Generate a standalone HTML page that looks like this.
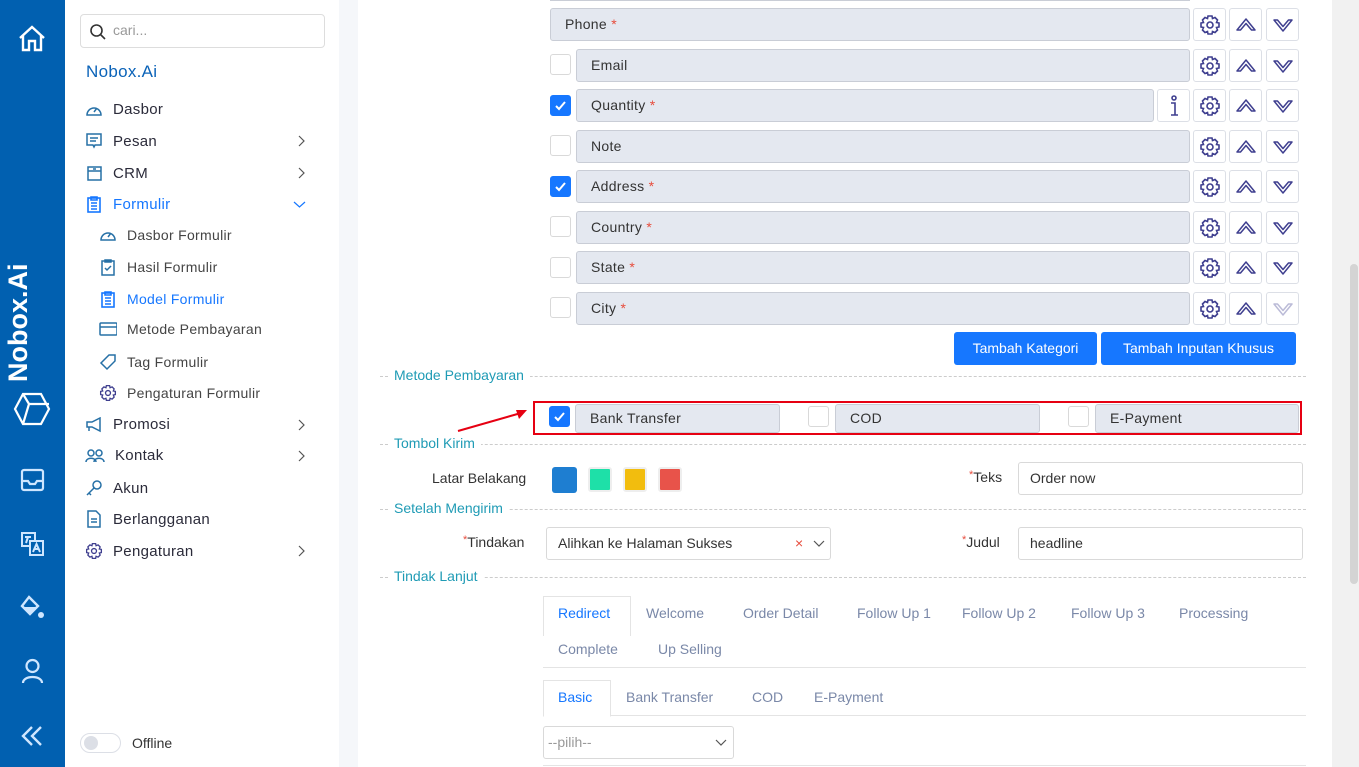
<!DOCTYPE html>
<html><head><meta charset="utf-8"><style>
*{box-sizing:border-box;margin:0;padding:0}
body{width:1359px;height:767px;overflow:hidden;font-family:"Liberation Sans",sans-serif;background:#f5f7fa;position:relative;color:#333}
.abs{position:absolute}
#bar{left:0;top:0;width:65px;height:767px;background:#0160b0}
#side{left:65px;top:0;width:274px;height:767px;background:#fff}
#main{left:358px;top:0;width:974px;height:767px;background:#fff}
#scroll{left:1332px;top:0;width:27px;height:767px;background:#f1f1f1}
.mi{position:absolute;left:20px;font-size:15px;color:#2b2b3a;display:flex;align-items:center;letter-spacing:0.3px}
.mi svg{margin-right:10px}
.sub{left:34px;font-size:14px;color:#444}
.chev{position:absolute;right:14px;top:3px}
.inp{position:absolute;background:#e4e8f0;border:1px solid #c9cdd6;border-radius:3px;height:33px;font-size:14px;color:#333;padding-left:14px;line-height:31px;letter-spacing:0.3px}
.inp b{color:#e74c3c;font-weight:normal}
.cb{position:absolute;width:21px;height:21px;border:1px solid #d9d9d9;border-radius:3px;background:#fff}
.cb.on{background:#1677ff;border-color:#1677ff}
.btn{position:absolute;width:33px;height:33px;border:1px solid #dcdfe6;border-radius:3px;background:#fff;display:flex;align-items:center;justify-content:center}
.sec{position:absolute;left:380px;width:926px;border-top:1px dashed #ccc}
.sec span{position:absolute;left:8px;top:-10px;background:#fff;padding:0 6px;color:#1f9bb5;font-size:14px}
.blue{position:absolute;background:#1677ff;color:#fff;font-size:14px;border-radius:3px;text-align:center;line-height:33px;height:33px}
.box{position:absolute;border:1px solid #d9d9d9;border-radius:3px;background:#fff;font-size:14px;line-height:31px;padding-left:11px;height:33px}
.lbl{position:absolute;font-size:14px;color:#333}
.lbl i{color:#e74c3c;font-style:normal;font-size:11px;vertical-align:top}
.tab{position:absolute;font-size:14px;color:#7a88a8}
</style></head><body>
<div id="bar" class="abs">
<svg class="abs" style="left:17px;top:24px" width="30" height="28" viewBox="0 0 30 28" fill="none" stroke="#fff" stroke-width="2.4"><path d="M3 14 L15 3 L27 14 M6 11 V26 H12 V17 H18 V26 H24 V11"/></svg>
<div class="abs" style="left:3px;top:382px;transform:rotate(-90deg);transform-origin:0 0;color:#fff;font-weight:bold;font-size:27px;width:130px;white-space:nowrap">Nobox.Ai</div>
<svg class="abs" style="left:13px;top:392px" width="38" height="34" viewBox="0 0 38 34" fill="none" stroke="#fff" stroke-width="2.2"><path d="M10 2 H28 L36 17 L28 32 H10 L2 17 Z M10 2 L16 12 H36 M16 12 L10 32"/></svg>
<svg class="abs" style="left:20px;top:468px" width="25" height="24" viewBox="0 0 25 24" fill="none" stroke="#cfe6ff" stroke-width="2.2"><rect x="2" y="2" width="21" height="20" rx="2"/><path d="M2 13 H8 L10 16 H15 L17 13 H23"/></svg>
<svg class="abs" style="left:20px;top:531px" width="25" height="26" viewBox="0 0 25 26" fill="none" stroke="#cfe6ff" stroke-width="2"><rect x="2" y="2" width="13" height="13"/><rect x="10" y="10" width="13" height="14" fill="#0160b0"/><path d="M13 21 L16.5 13 L20 21 M14 18 H19 M5 6 H11 M8 6 L6 12"/></svg>
<svg class="abs" style="left:20px;top:594px" width="26" height="26" viewBox="0 0 26 26" fill="#cfe6ff"><path d="M9 3 L18 12 L10 20 L2 12 Z" fill="none" stroke="#cfe6ff" stroke-width="2.4"/><path d="M4 13 H17 L10 20 Z"/><circle cx="21" cy="21" r="3"/></svg>
<svg class="abs" style="left:21px;top:658px" width="23" height="26" viewBox="0 0 23 26" fill="none" stroke="#cfe6ff" stroke-width="2.2"><circle cx="11.5" cy="8" r="6"/><path d="M2 25 C2 17 21 17 21 25"/></svg>
<svg class="abs" style="left:20px;top:724px" width="24" height="24" viewBox="0 0 24 24" fill="none" stroke="#cfe6ff" stroke-width="2.4"><path d="M12 3 L3 12 L12 21 M21 3 L12 12 L21 21"/></svg>
</div>
<svg width="0" height="0" style="position:absolute"><defs>
<g id="gear"><circle cx="11" cy="11" r="3" fill="none" stroke="#3f3f8f" stroke-width="1.6"/><path d="M9 2 H13 L13.5 4.5 L16 3.5 L18.5 6 L17.5 8.5 L20 9 V13 L17.5 13.5 L18.5 16 L16 18.5 L13.5 17.5 L13 20 H9 L8.5 17.5 L6 18.5 L3.5 16 L4.5 13.5 L2 13 V9 L4.5 8.5 L3.5 6 L6 3.5 L8.5 4.5 Z" fill="none" stroke="#3f3f8f" stroke-width="1.6"/></g>
<g id="up"><path d="M2 15 L11 4 L20 15 L16.5 15 L11 8.5 L5.5 15 Z" fill="none" stroke="#3f3f8f" stroke-width="1.5" stroke-linejoin="round"/></g>
<path id="ch" d="M2 1 L7 6 L2 11" fill="none" stroke="#555" stroke-width="1.2"/>
</defs></svg>
<div id="side" class="abs">
<div class="abs" style="left:15px;top:14px;width:245px;height:34px;border:1px solid #ddd;border-radius:4px"></div>
<svg class="abs" style="left:24px;top:23px" width="18" height="18" viewBox="0 0 18 18" fill="none" stroke="#333" stroke-width="1.6"><circle cx="7.5" cy="7.5" r="5.5"/><path d="M11.5 11.5 L16 16"/></svg>
<div class="abs" style="left:48px;top:22px;font-size:14px;color:#999">cari...</div>
<div class="abs" style="left:21px;top:62px;font-size:17px;color:#0b63b8;letter-spacing:0.3px">Nobox.Ai</div>
<div class="mi" style="top:101px"><svg width="18" height="16" viewBox="0 0 18 16" fill="none" stroke="#2670a6" stroke-width="1.5"><path d="M2 13 A7 7 0 1 1 16 13 Z M9 10 L12 6"/></svg>Dasbor</div>
<div class="mi" style="top:132px;width:245px"><svg width="18" height="18" viewBox="0 0 18 18" fill="none" stroke="#2670a6" stroke-width="1.5"><path d="M2 2 H16 V13 H10 L9 15 L8 13 H2 Z M5 6 H13 M5 9 H11"/></svg>Pesan<svg class="chev" width="9" height="12"><use href="#ch"/></svg></div>
<div class="mi" style="top:164px;width:245px"><svg width="18" height="18" viewBox="0 0 18 18" fill="none" stroke="#2670a6" stroke-width="1.5"><rect x="3" y="3" width="13" height="13"/><path d="M3 7 H16 M8 5 H11"/></svg>CRM<svg class="chev" width="9" height="12"><use href="#ch"/></svg></div>
<div class="mi" style="top:195px;width:245px;color:#1677ff"><svg width="18" height="18" viewBox="0 0 18 18" fill="none" stroke="#1677ff" stroke-width="1.6"><rect x="3" y="3" width="12" height="14"/><path d="M6 2 H12 V5 H6 Z M6 8 H12 M6 11 H12 M6 14 H12"/></svg>Formulir<svg class="chev" width="13" height="10" style="top:5px" viewBox="0 0 13 10"><path d="M1 2 L6.5 7 L12 2" fill="none" stroke="#1677ff" stroke-width="1.2"/></svg></div>
<div class="mi sub" style="top:227px"><svg width="18" height="16" viewBox="0 0 18 16" fill="none" stroke="#2670a6" stroke-width="1.5"><path d="M2 13 A7 7 0 1 1 16 13 Z M9 10 L12 6"/></svg>Dasbor Formulir</div>
<div class="mi sub" style="top:258px"><svg width="18" height="18" viewBox="0 0 18 18" fill="none" stroke="#2670a6" stroke-width="1.5"><rect x="3" y="3" width="12" height="14"/><path d="M6 2 H12 V4 H6 Z M6 10 L8 12 L12 8"/></svg>Hasil Formulir</div>
<div class="mi sub" style="top:290px;color:#1677ff"><svg width="18" height="18" viewBox="0 0 18 18" fill="none" stroke="#1677ff" stroke-width="1.6"><rect x="3" y="3" width="12" height="14"/><path d="M6 2 H12 V5 H6 Z M6 8 H12 M6 11 H12 M6 14 H12"/></svg>Model Formulir</div>
<div class="mi sub" style="top:321px"><svg width="18" height="16" viewBox="0 0 18 16" fill="none" stroke="#2670a6" stroke-width="1.5"><rect x="1" y="2" width="17" height="12" rx="1"/><path d="M1 6 H18"/></svg>Metode Pembayaran</div>
<div class="mi sub" style="top:353px"><svg width="18" height="18" viewBox="0 0 18 18" fill="none" stroke="#2670a6" stroke-width="1.5"><path d="M10 2 H16 V8 L8 16 L2 10 Z"/></svg>Tag Formulir</div>
<div class="mi sub" style="top:384px"><svg width="18" height="18" viewBox="0 0 22 22"><use href="#gear"/></svg>Pengaturan Formulir</div>
<div class="mi" style="top:416px;width:245px"><svg width="18" height="16" viewBox="0 0 18 16" fill="none" stroke="#2670a6" stroke-width="1.5"><path d="M2 5 H7 L15 1 V14 L7 10 H2 Z M4 10 V14"/></svg>Promosi<svg class="chev" width="9" height="12"><use href="#ch"/></svg></div>
<div class="mi" style="top:447px;width:245px"><svg width="20" height="16" viewBox="0 0 20 16" fill="none" stroke="#2670a6" stroke-width="1.5"><circle cx="6" cy="5" r="3"/><circle cx="14" cy="5" r="3"/><path d="M1 14 C1 9 11 9 11 14 M9 14 C9 9 19 9 19 14"/></svg>Kontak<svg class="chev" width="9" height="12"><use href="#ch"/></svg></div>
<div class="mi" style="top:479px"><svg width="18" height="18" viewBox="0 0 18 18" fill="none" stroke="#2670a6" stroke-width="1.5"><circle cx="12" cy="6" r="4"/><path d="M9 9 L2 16 M4 14 L6 16"/></svg>Akun</div>
<div class="mi" style="top:510px"><svg width="18" height="18" viewBox="0 0 18 18" fill="none" stroke="#2670a6" stroke-width="1.5"><path d="M3 1 H11 L15 5 V17 H3 Z M6 9 H12 M6 12 H12"/></svg>Berlangganan</div>
<div class="mi" style="top:542px;width:245px"><svg width="18" height="18" viewBox="0 0 22 22"><use href="#gear"/></svg>Pengaturan<svg class="chev" width="9" height="12"><use href="#ch"/></svg></div>
<div class="abs" style="left:15px;top:733px;width:41px;height:20px;border:1px solid #dcdfe6;border-radius:10px"><div style="width:14px;height:14px;border-radius:7px;background:#dcdfe6;margin:2px 3px"></div></div>
<div class="abs" style="left:67px;top:735px;font-size:14px;color:#333">Offline</div>
</div>
<div id="main" class="abs"></div>
<div id="scroll" class="abs"><div class="abs" style="left:18px;top:264px;width:8px;height:320px;background:#d4d4d4;border-radius:4px"></div></div>

<div class="inp" style="left:550px;top:8px;width:640px">Phone <b>*</b></div>
<div class="cb" style="left:550px;top:54px"></div><div class="inp" style="left:576px;top:49px;width:614px">Email</div>
<div class="cb on" style="left:550px;top:95px"><svg width="19" height="19" viewBox="0 0 19 19"><path d="M5 10 L8 13 L14 6" fill="none" stroke="#fff" stroke-width="2"/></svg></div><div class="inp" style="left:576px;top:89px;width:578px">Quantity <b>*</b></div>
<div class="cb" style="left:550px;top:135px"></div><div class="inp" style="left:576px;top:130px;width:614px">Note</div>
<div class="cb on" style="left:550px;top:176px"><svg width="19" height="19" viewBox="0 0 19 19"><path d="M5 10 L8 13 L14 6" fill="none" stroke="#fff" stroke-width="2"/></svg></div><div class="inp" style="left:576px;top:170px;width:614px">Address <b>*</b></div>
<div class="cb" style="left:550px;top:216px"></div><div class="inp" style="left:576px;top:211px;width:614px">Country <b>*</b></div>
<div class="cb" style="left:550px;top:257px"></div><div class="inp" style="left:576px;top:251px;width:614px">State <b>*</b></div>
<div class="cb" style="left:550px;top:297px"></div><div class="inp" style="left:576px;top:292px;width:614px">City <b>*</b></div>
<div class="btn" style="left:1157px;top:89px"><svg width="12" height="22" viewBox="0 0 12 22" fill="none" stroke="#3f3f8f" stroke-width="1.6"><circle cx="6" cy="3" r="2"/><path d="M3 8 H7 V20 M3 20 H10"/></svg></div>
<div id="btns"></div>
<script>
var ys=[8,49,89,130,170,211,251,292],h='';
ys.forEach(function(y,i){
h+='<div class="btn" style="left:1193px;top:'+y+'px"><svg width="22" height="22"><use href="#gear"/></svg></div>';
h+='<div class="btn" style="left:1229px;top:'+y+'px"><svg width="22" height="20"><use href="#up"/></svg></div>';
h+='<div class="btn" style="left:1266px;top:'+y+'px"><svg width="22" height="20" style="transform:scaleY(-1);opacity:'+(i==7?0.35:1)+'"><use href="#up"/></svg></div>';
});
document.getElementById('btns').innerHTML=h;
</script>
<div class="abs" style="left:550px;top:0;width:640px;height:1px;background:#c9cdd6"></div>
<div class="blue" style="left:954px;top:332px;width:143px">Tambah Kategori</div>
<div class="blue" style="left:1101px;top:332px;width:195px">Tambah Inputan Khusus</div>

<div class="sec" style="top:376px"><span>Metode Pembayaran</span></div>
<div class="abs" style="left:533px;top:401px;width:769px;height:34px;border:2px solid #e60012"></div>
<div class="cb on" style="left:549px;top:406px"><svg width="19" height="19" viewBox="0 0 19 19"><path d="M5 10 L8 13 L14 6" fill="none" stroke="#fff" stroke-width="2"/></svg></div>
<div class="inp" style="left:575px;top:404px;width:205px;height:29px;line-height:27px">Bank Transfer</div>
<div class="cb" style="left:808px;top:406px"></div>
<div class="inp" style="left:835px;top:404px;width:205px;height:29px;line-height:27px">COD</div>
<div class="cb" style="left:1068px;top:406px"></div>
<div class="inp" style="left:1095px;top:404px;width:204px;height:29px;line-height:27px">E-Payment</div>
<svg class="abs" style="left:455px;top:405px" width="80" height="30"><path d="M3 26 L66 8" stroke="#e60012" stroke-width="2"/><path d="M72 5 L61 5 L64 14 Z" fill="#e60012"/></svg>

<div class="sec" style="top:444px"><span>Tombol Kirim</span></div>
<div class="lbl" style="left:432px;top:470px">Latar Belakang</div>
<div class="abs" style="left:552px;top:467px;width:25px;height:26px;background:#1e7ed1;border-radius:3px"></div>
<div class="abs" style="left:588px;top:467px;width:24px;height:25px;background:#1ee0a8;border-radius:3px;border:2px solid #eee"></div>
<div class="abs" style="left:623px;top:467px;width:24px;height:25px;background:#f2bd0e;border-radius:3px;border:2px solid #eee"></div>
<div class="abs" style="left:658px;top:467px;width:24px;height:25px;background:#e8534a;border-radius:3px;border:2px solid #eee"></div>
<div class="lbl" style="left:969px;top:469px"><i>*</i>Teks</div>
<div class="box" style="left:1018px;top:462px;width:285px">Order now</div>

<div class="sec" style="top:509px"><span>Setelah Mengirim</span></div>
<div class="lbl" style="left:463px;top:534px"><i>*</i>Tindakan</div>
<div class="box" style="left:546px;top:527px;width:285px">Alihkan ke Halaman Sukses<span style="position:absolute;left:248px;color:#e74c3c">×</span><svg style="position:absolute;left:266px;top:12px" width="12" height="8"><path d="M1 1 L6 6 L11 1" fill="none" stroke="#555" stroke-width="1.2"/></svg></div>
<div class="lbl" style="left:962px;top:534px"><i>*</i>Judul</div>
<div class="box" style="left:1018px;top:527px;width:285px">headline</div>

<div class="sec" style="top:577px"><span>Tindak Lanjut</span></div>
<div class="abs" style="left:543px;top:596px;width:88px;height:40px;border:1px solid #e4e4e4;border-bottom:none;background:#fff"></div>
<div class="tab" style="left:558px;top:605px;color:#1677ff">Redirect</div>
<div class="tab" style="left:646px;top:605px">Welcome</div>
<div class="tab" style="left:743px;top:605px">Order Detail</div>
<div class="tab" style="left:857px;top:605px">Follow Up 1</div>
<div class="tab" style="left:962px;top:605px">Follow Up 2</div>
<div class="tab" style="left:1071px;top:605px">Follow Up 3</div>
<div class="tab" style="left:1179px;top:605px">Processing</div>
<div class="tab" style="left:558px;top:641px">Complete</div>
<div class="tab" style="left:658px;top:641px">Up Selling</div>
<div class="abs" style="left:543px;top:667px;width:763px;height:1px;background:#e4e4e4"></div>
<div class="abs" style="left:543px;top:680px;width:763px;height:36px;border-bottom:1px solid #e4e4e4"></div>
<div class="abs" style="left:543px;top:680px;width:68px;height:37px;border:1px solid #e4e4e4;border-bottom:1px solid #fff;background:#fff"></div>
<div class="tab" style="left:558px;top:689px;color:#1677ff">Basic</div>
<div class="tab" style="left:626px;top:689px">Bank Transfer</div>
<div class="tab" style="left:752px;top:689px">COD</div>
<div class="tab" style="left:814px;top:689px">E-Payment</div>
<div class="box" style="left:543px;top:726px;width:191px;color:#999;padding-left:4px">--pilih--<svg style="position:absolute;left:171px;top:12px" width="12" height="8"><path d="M1 1 L6 6 L11 1" fill="none" stroke="#555" stroke-width="1.2"/></svg></div>
<div class="abs" style="left:543px;top:765px;width:763px;height:2px;border-top:1px solid #e4e4e4"></div>
</body></html>
